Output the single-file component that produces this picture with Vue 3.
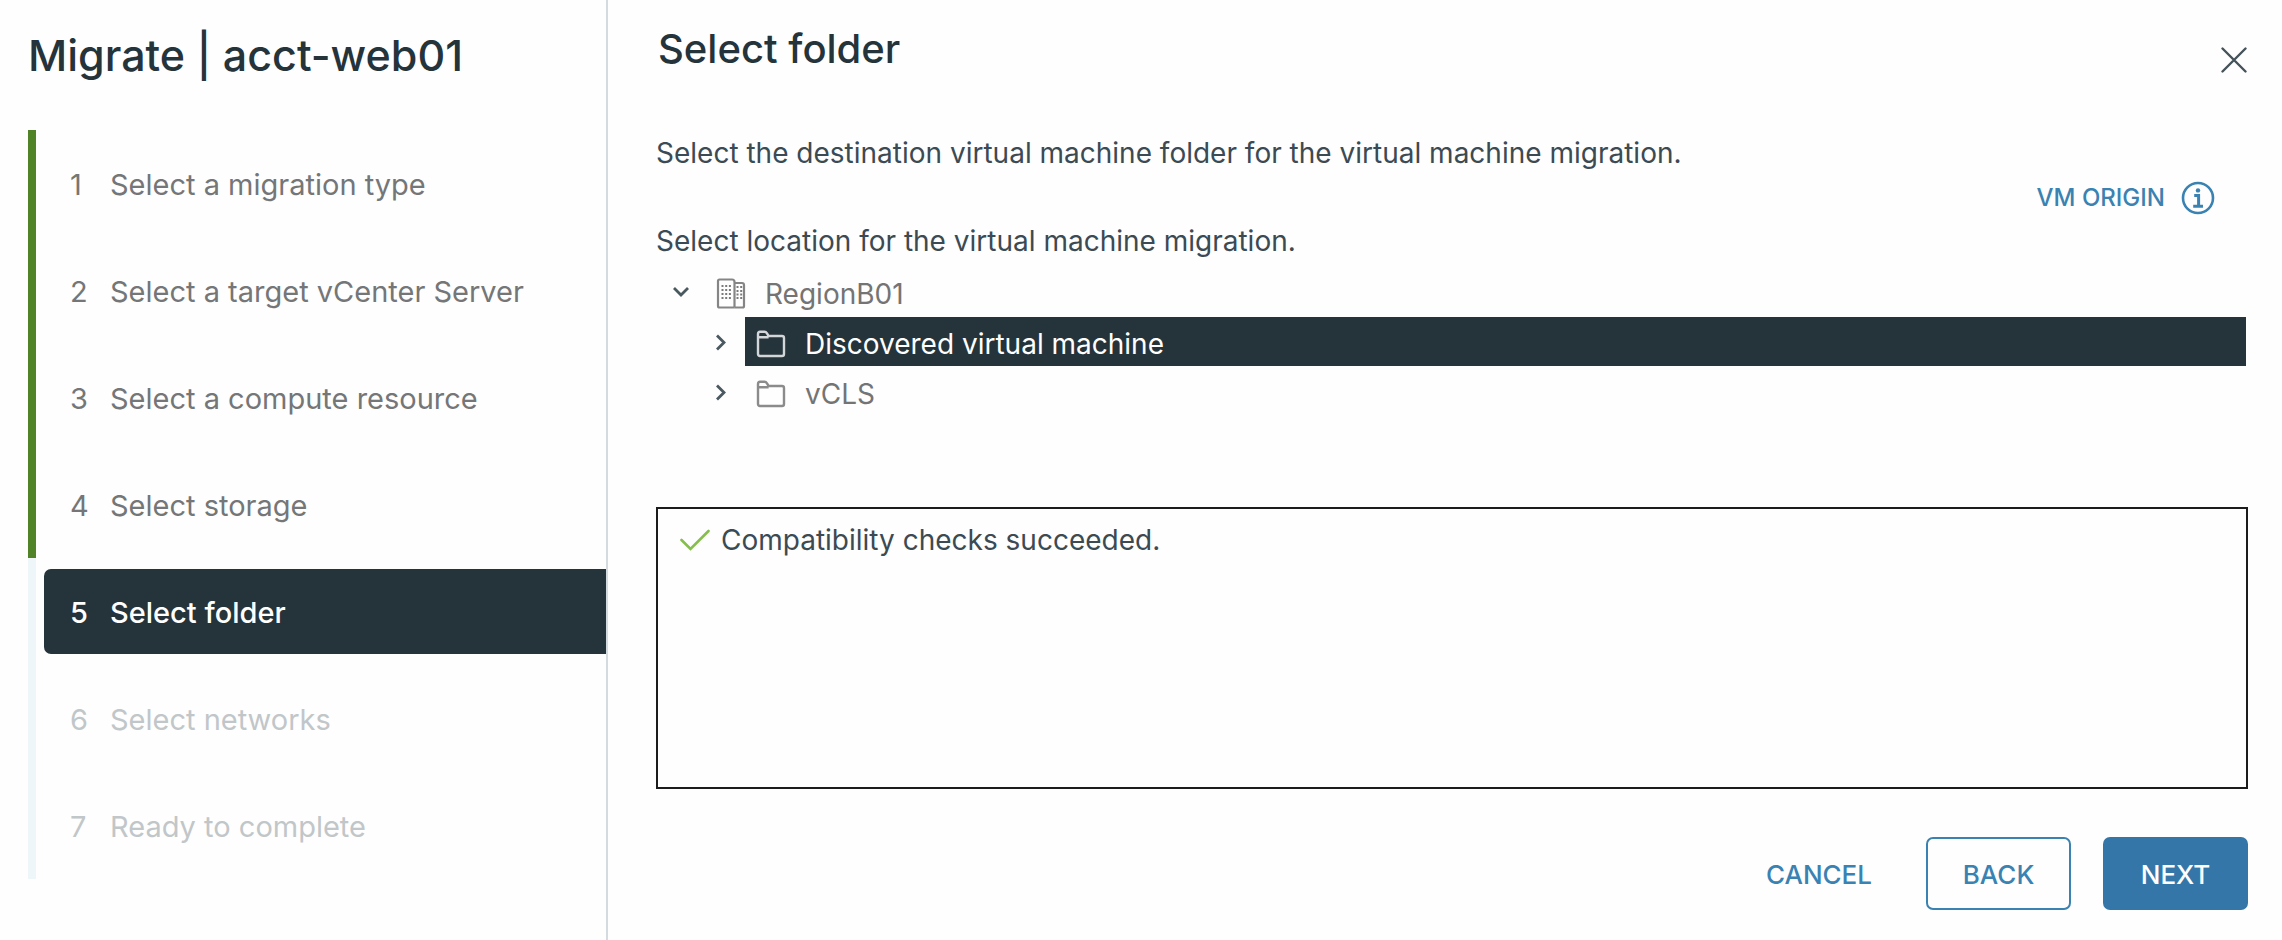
<script setup>
import { ref } from 'vue'

const steps = [
  'Select a migration type',
  'Select a target vCenter Server',
  'Select a compute resource',
  'Select storage',
  'Select folder',
  'Select networks',
  'Ready to complete',
]
const current = ref(4)

const folders = ['Discovered virtual machine', 'vCLS']
const selected = ref('Discovered virtual machine')

function stateOf(index) {
  if (index < current.value) return 'done'
  return index === current.value ? 'active' : 'pending'
}
</script>

<template>
  <div class="wizard">
    <aside class="sidebar">
      <h1 class="wizard-title">Migrate | acct-web01</h1>
      <nav aria-label="Migration steps">
        <ol class="steps">
          <li v-for="(label, i) in steps" :key="label" class="step" :class="stateOf(i)">
            <button
              type="button"
              class="step-button"
              :disabled="i > current"
              :aria-current="i === current ? 'step' : undefined"
            >
              <span class="step-number">{{ i + 1 }}</span>
              <span>{{ label }}</span>
            </button>
          </li>
        </ol>
      </nav>
    </aside>

    <main class="content">
      <header class="header">
        <h2 class="page-title">Select folder</h2>
        <button type="button" class="close" aria-label="Close">
          <svg viewBox="0 0 26 26" width="26" height="26" aria-hidden="true">
            <path d="M1.5 1.5 24.5 24.5M24.5 1.5 1.5 24.5" fill="none" stroke="#44525a" stroke-width="2.4" stroke-linecap="round" />
          </svg>
        </button>
      </header>

      <p>Select the destination virtual machine folder for the virtual machine migration.</p>
      <div class="origin-row">
        <button type="button" class="origin">
          <span>VM ORIGIN</span>
          <svg viewBox="0 0 34 34" width="34" height="34" aria-hidden="true">
            <circle cx="17" cy="17" r="15" fill="none" stroke="currentColor" stroke-width="2.6" />
            <circle cx="17" cy="9.4" r="2.2" fill="currentColor" />
            <path d="M13.2 14.6H17.6V25M12.2 25.2H22" fill="none" stroke="currentColor" stroke-width="3" />
          </svg>
        </button>
      </div>
      <p>Select location for the virtual machine migration.</p>

      <ul class="tree" role="tree" aria-label="Folders">
        <li role="treeitem" aria-expanded="true">
          <div class="row">
            <button type="button" class="toggle" aria-label="Collapse RegionB01">
              <svg viewBox="0 0 18 18" width="18" height="18" aria-hidden="true">
                <path d="M2 4 9 11 16 4" fill="none" stroke="#4a5860" stroke-width="2.8" />
              </svg>
            </button>
            <button type="button" class="node">
              <svg viewBox="0 0 30 32" width="30" height="32" aria-hidden="true">
                <g fill="none" stroke="#858585" stroke-width="2.2">
                  <path d="M18.5 29.5H3.5Q2 29.5 2 28V3Q2 1.500 3.500 1.500H16Q18.500 1.500 18.500 4V29.500" />
                  <path d="M18.5 5H26Q28 5 28 7V28Q28 29.5 26.5 29.5H18.5" />
                </g>
                <path d="M5.500 8H15M5.500 12H15M5.500 16H15M5.500 20H15M20.500 9H26.500M20.500 13H26.500M20.500 16.500H26.500M20.500 20H26.500" fill="none" stroke="#7a7a7a" stroke-width="1.8" stroke-dasharray="2 1.700" />
              </svg>
              <span>RegionB01</span>
            </button>
          </div>
          <ul class="branch" role="group">
            <li v-for="name in folders" :key="name" class="row" role="treeitem" :aria-selected="name === selected">
              <button type="button" class="toggle" :aria-label="'Expand ' + name">
                <svg viewBox="0 0 18 18" width="18" height="18" aria-hidden="true">
                  <path d="M5 1.5 12 8.5 5 15.5" fill="none" stroke="#4a5860" stroke-width="2.8" />
                </svg>
              </button>
              <button type="button" class="node" :class="{ selected: name === selected }" @click="selected = name">
                <svg class="folder" viewBox="0 0 30 28" width="30" height="28" aria-hidden="true">
                  <path d="M2 7.2V4Q2 1.8 4 1.8H8.5Q10 1.8 11 3.4L12.6 6H26Q28 6 28 8V24Q28 26 26 26H4Q2 26 2 24V7.2H12.6" fill="none" stroke="currentColor" stroke-width="2.4" stroke-linejoin="round" />
                </svg>
                <span>{{ name }}</span>
              </button>
            </li>
          </ul>
        </li>
      </ul>

      <section class="checks" aria-label="Compatibility">
        <p class="check">
          <svg viewBox="0 0 30 22" width="30" height="22" aria-hidden="true">
            <path d="M1.5 11 10.5 20 28.5 2" fill="none" stroke="#86be4b" stroke-width="2.6" stroke-linecap="round" />
          </svg>
          <span>Compatibility checks succeeded.</span>
        </p>
      </section>

      <footer class="actions">
        <button type="button" class="btn">CANCEL</button>
        <button type="button" class="btn outline">BACK</button>
        <button type="button" class="btn primary">NEXT</button>
      </footer>
    </main>
  </div>
</template>

<style>
body {
  margin: 0;
  background: #fefefe;
}
</style>

<style scoped>
.wizard {
  display: flex;
  min-height: 100vh;
  color: #3c4a53;
  font-family: Inter, "Liberation Sans", sans-serif;
  font-size: 28px;
  line-height: 36px;
}
.wizard * {
  box-sizing: border-box;
}
h1,
h2,
p,
ol,
ul {
  margin: 0;
  padding: 0;
  font-weight: 400;
  list-style: none;
}
button {
  margin: 0;
  padding: 0;
  border: 0;
  background: none;
  color: inherit;
  font: inherit;
  text-align: left;
  cursor: pointer;
}
svg {
  display: block;
  flex: none;
}
.sidebar {
  flex: 0 0 608px;
  padding: 29px 0 28px 28px;
  border-right: 2px solid #d3dae0;
}
.wizard-title {
  margin-bottom: 49px;
  color: #25333b;
  font-size: 43px;
  font-weight: 500;
  line-height: 52px;
}
.step {
  height: 107px;
  padding: 11px 0 11px 8px;
  border-left: 8px solid #eef6f9;
  color: #747678;
  font-size: 29px;
}
.step.done {
  border-color: #508327;
}
.step-button {
  display: flex;
  align-items: center;
  gap: 23px;
  width: 100%;
  height: 100%;
  padding: 2px 0 0 26px;
  border-radius: 7px 0 0 7px;
}
.step-number {
  width: 17px;
}
.step.active .step-button {
  background: #25333b;
  color: #fff;
  font-weight: 500;
}
.step.pending {
  color: #c1c6c9;
}
.content {
  display: flex;
  flex: 1;
  flex-direction: column;
  min-width: 0;
  padding: 24px 34px 30px 48px;
}
.header {
  display: flex;
  justify-content: space-between;
  align-items: flex-start;
  margin-bottom: 55px;
}
.page-title {
  padding-left: 2px;
  color: #25333b;
  font-size: 40px;
  font-weight: 500;
  line-height: 50px;
}
.close {
  display: flex;
  align-items: flex-end;
  justify-content: flex-end;
  width: 40px;
  height: 56px;
  padding: 0 1px 7px 0;
}
.origin-row {
  display: flex;
  justify-content: flex-end;
  padding: 10px 33px 8px 0;
}
.origin {
  display: flex;
  align-items: center;
  gap: 16px;
  color: #3a82b2;
  font-size: 24px;
  font-weight: 500;
  line-height: 34px;
}
.tree {
  min-height: 240px;
  padding: 8px 2px 0 14px;
}
.branch {
  padding-left: 40px;
}
.row {
  display: flex;
  height: 50px;
}
.toggle {
  display: flex;
  flex: none;
  align-items: center;
  justify-content: center;
  width: 22px;
  height: 49px;
  padding-top: 3px;
}
.node {
  display: flex;
  flex: 1;
  align-items: center;
  gap: 19px;
  height: 49px;
  margin-left: 13px;
  padding: 5px 0 0 11px;
  color: #747474;
}
.node.selected {
  background: #25333b;
  color: #fff;
}
.folder {
  color: #8b8b8b;
}
.selected .folder {
  color: #d3d6d8;
}
.checks {
  flex: 1;
  min-height: 120px;
  margin-top: 8px;
  padding: 13px 22px;
  border: 2px solid #1c1c1c;
}
.check {
  display: flex;
  align-items: center;
  gap: 11px;
}
.actions {
  display: flex;
  justify-content: flex-end;
  gap: 32px;
  margin-top: 48px;
}
.btn {
  min-width: 145px;
  height: 73px;
  padding: 2px 20px 0;
  border: 2px solid transparent;
  border-radius: 7px;
  color: #3a82b2;
  font-size: 26px;
  font-weight: 500;
  text-align: center;
}
.btn.outline {
  border-color: #3a82b2;
}
.btn.primary {
  background: #3576a9;
  color: #fff;
}
</style>
